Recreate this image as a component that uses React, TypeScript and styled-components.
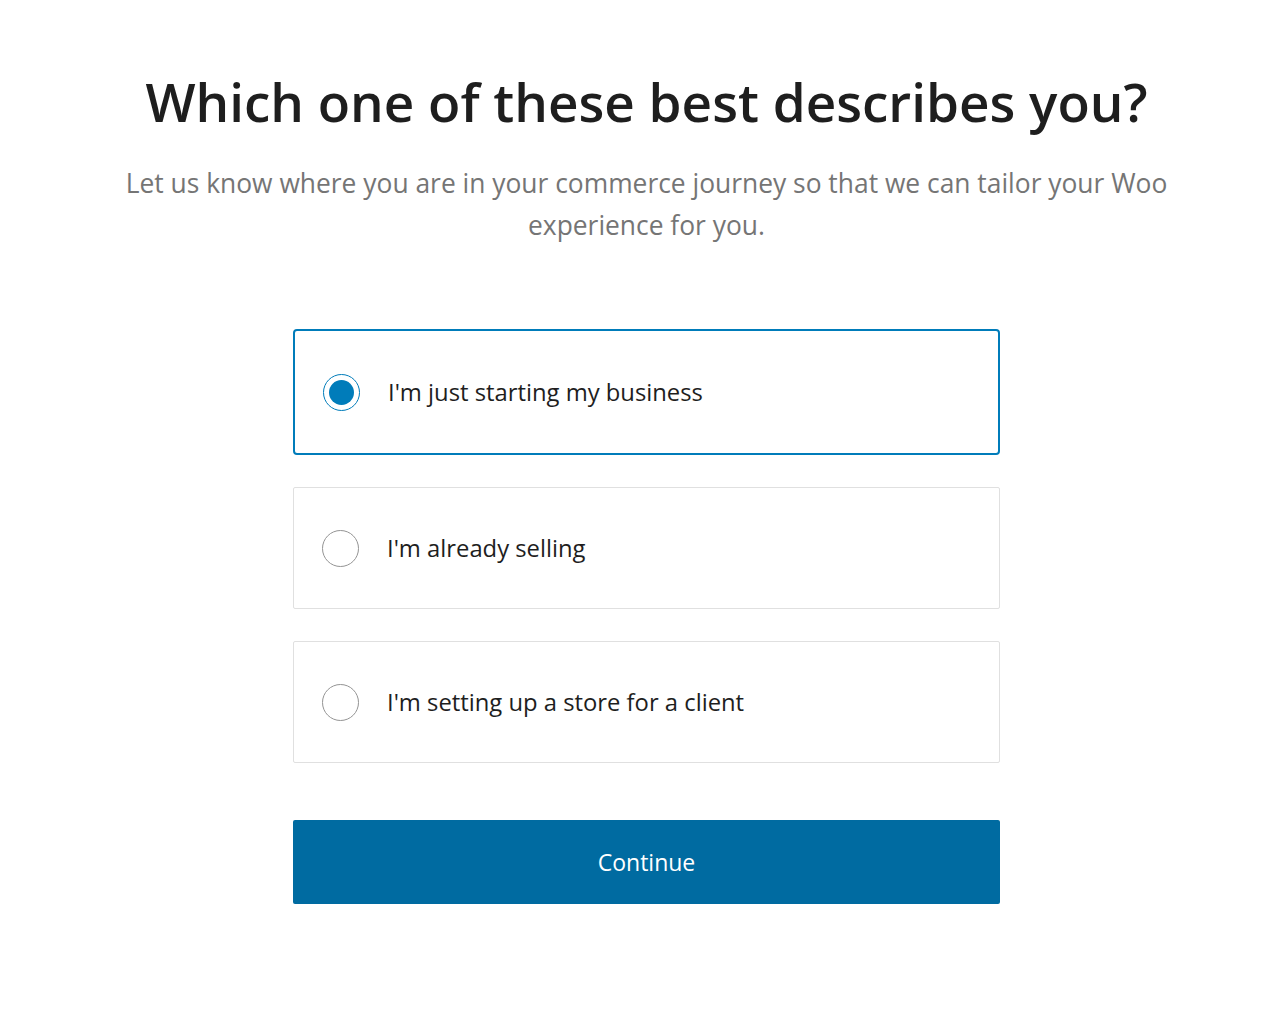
import React, { useState } from 'react';
import styled, { createGlobalStyle } from 'styled-components';

const GlobalStyle = createGlobalStyle`
  html, body {
    margin: 0;
    background: #fff;
  }
  body {
    font-family: "Open Sans", "Noto Sans", sans-serif;
    color: #1e1e1e;
  }
`;

const Page = styled.main`
  display: flex;
  flex-direction: column;
  align-items: center;
  padding: 64px 0 0 21px;
`;

const Title = styled.h1`
  margin: 0;
  font-size: 53px;
  font-weight: 600;
  line-height: 76px;
  color: #1e1e1e;
  text-align: center;
`;

const Subtitle = styled.p`
  margin: 22px 0 0;
  max-width: 1080px;
  font-size: 26.4px;
  line-height: 42px;
  color: #757575;
  text-align: center;
`;

const Options = styled.div`
  display: flex;
  flex-direction: column;
  gap: 32px;
  width: 707px;
  margin-top: 83px;
`;

const Option = styled.label<{ $checked: boolean }>`
  display: flex;
  align-items: center;
  gap: 28px;
  box-sizing: border-box;
  height: ${(p) => (p.$checked ? 126 : 122)}px;
  padding: 0 28px;
  border: ${(p) => (p.$checked ? '2px solid #007cba' : '1px solid #e0e0e0')};
  border-radius: ${(p) => (p.$checked ? 4 : 2)}px;
  cursor: pointer;
`;

const Radio = styled.span<{ $checked: boolean }>`
  position: relative;
  flex: none;
  box-sizing: border-box;
  width: 37px;
  height: 37px;
  border-radius: 50%;
  border: 1px solid ${(p) => (p.$checked ? '#007cba' : '#949494')};

  &::after {
    content: '';
    display: ${(p) => (p.$checked ? 'block' : 'none')};
    position: absolute;
    inset: 5px;
    border-radius: 50%;
    background: #007cba;
  }
`;

const HiddenInput = styled.input`
  position: absolute;
  opacity: 0;
  pointer-events: none;
`;

const OptionText = styled.span`
  font-size: 23.8px;
  font-weight: 500;
  line-height: 32px;
  color: #1e1e1e;
`;

const ContinueButton = styled.button`
  margin-top: 57px;
  width: 707px;
  height: 84px;
  border: none;
  border-radius: 2px;
  background: #006ba1;
  color: #fff;
  font-family: inherit;
  font-size: 23px;
  cursor: pointer;
`;

const choices = [
  { id: 'starting', label: "I'm just starting my business" },
  { id: 'selling', label: "I'm already selling" },
  { id: 'client', label: "I'm setting up a store for a client" },
];

export default function App() {
  const [selected, setSelected] = useState('starting');

  return (
    <>
      <GlobalStyle />
      <Page>
        <Title>Which one of these best describes you?</Title>
        <Subtitle>
          Let us know where you are in your commerce journey so that we can tailor your Woo
          experience for you.
        </Subtitle>
        <Options>
          {choices.map((c) => {
            const checked = selected === c.id;
            return (
              <Option key={c.id} $checked={checked}>
                <HiddenInput
                  type="radio"
                  name="business-choice"
                  checked={checked}
                  onChange={() => setSelected(c.id)}
                />
                <Radio $checked={checked} />
                <OptionText>{c.label}</OptionText>
              </Option>
            );
          })}
        </Options>
        <ContinueButton>Continue</ContinueButton>
      </Page>
    </>
  );
}
